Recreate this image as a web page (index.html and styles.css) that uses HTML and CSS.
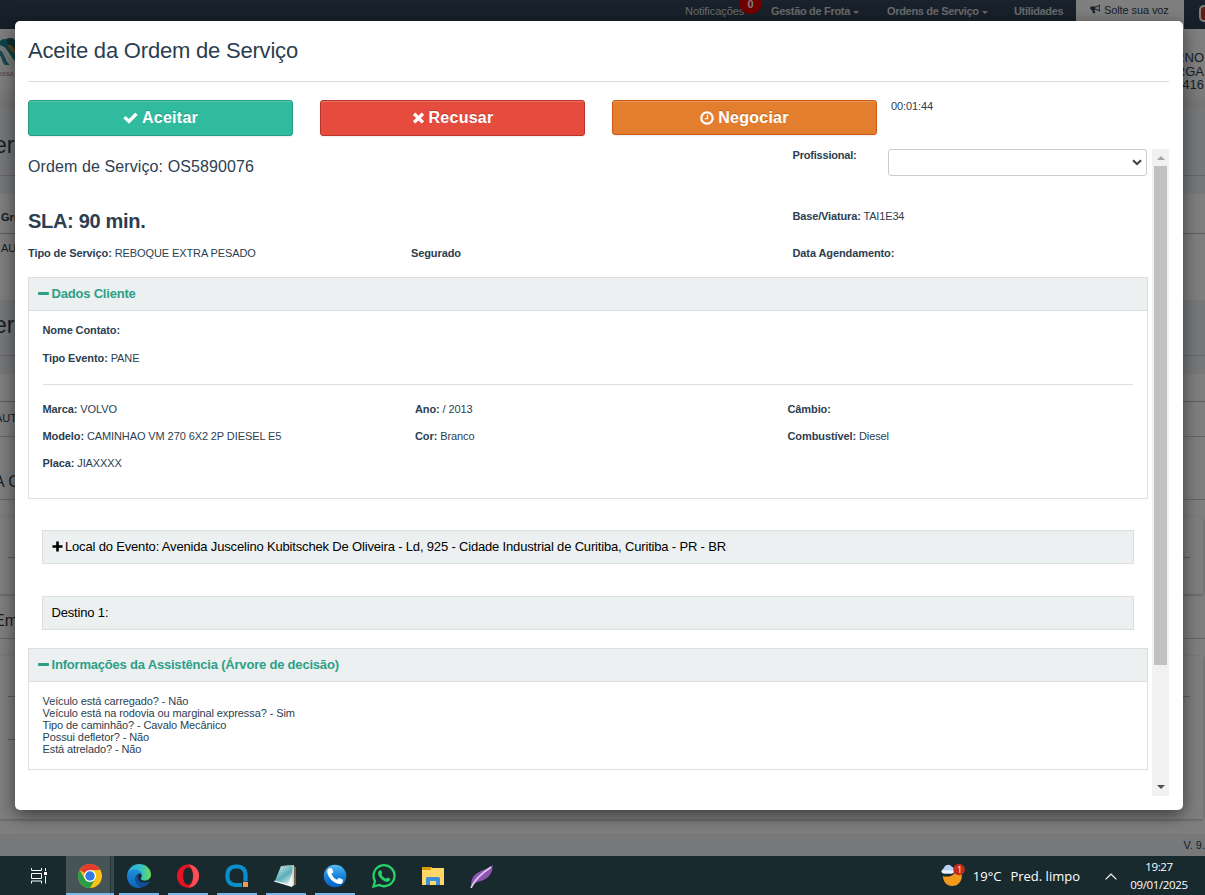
FILE: index.html
```html
<!DOCTYPE html>
<html lang="pt-BR">
<head>
  <meta charset="UTF-8" />
  <meta name="viewport" content="width=device-width, initial-scale=1.0"/>
  <title>Aceite da Ordem de Serviço</title>
  <link rel="stylesheet" href="styles.css">
</head>
<body>

  <!-- Page behind the modal -->
  <div class="page">
    <nav class="navbar">
      <span class="nav-item nav-notif">Notificações<b class="badge">0</b></span>
      <span class="nav-item nav-frota">Gestão de Frota <i class="caret"></i></span>
      <span class="nav-item nav-ordens">Ordens de Serviço <i class="caret"></i></span>
      <span class="nav-item nav-util">Utilidades</span>
      <span class="nav-voice">
        <svg width="11" height="10" viewBox="0 0 11 10"><path d="M9.8.3v7.6C8.2 6.500 6.400 5.800 4.500 5.800c-.2 1 .2 1.700.9 2.500-.3 1-1.700 1.300-2.500.7C2.300 7.800 2.100 6.900 2.300 5.800H1.200C.6 5.800.3 5.500.3 5V3.400c0-.5.3-.8.9-.8h3C6.200 2.600 8.200 1.800 9.800.3z" fill="#2c3e50"/><path d="M5.200 3.500C6.600 3.400 7.800 2.900 8.900 2.100v4C7.800 5.400 6.600 4.900 5.200 4.800z" fill="#fff"/></svg>
        Solte sua voz
      </span>
      <span class="nav-exit"></span>
    </nav>
    <header class="brand">
      <div class="logo">
        <svg width="15" height="32" viewBox="0 0 15 32"><path d="M0 5C4 1 8 2 15 14v11C9 19 5 8 0 10z" fill="#1b8a92"/><path d="M6 3c4-2 9-1 9 2v10C11 13 8 8 6 3z" fill="#185d69"/><path d="M8 9c4-1 7 3 7 8-3 0-6-4-7-8z" fill="#c98b2d"/><path d="M0 14c5 3 5 11 10 15H5C2 27 2 21 0 20z" fill="#2a929a"/><path d="M0 9c5 2 7 10 13 18v2C6 24 4 15 0 13z" fill="#e4efef"/></svg>
        <span>OSSA</span>
      </div>
      <div class="company">TERNO<br>CARGA<br>0416</div>
    </header>
    <div class="band band-title">er</div>
    <div class="band band-gap"></div>
    <div class="table">
      <div class="th">Gru</div>
      <div class="td">AU</div>
    </div>
    <div class="band band-title second">er</div>
    <div class="band band-gap"></div>
    <div class="table short">
      <div class="th"></div>
      <div class="td">AUT</div>
    </div>
    <div class="section-title">A C</div>
    <div class="card"></div>
    <div class="section-title last">Em</div>
    <div class="card tall"></div>
    <footer class="version">V. 9.</footer>
  </div>
  <div class="backdrop"></div>

  <div class="modal">
    <h1>Aceite da Ordem de Serviço</h1>

    <div class="actions">
      <button class="btn btn-accept">
        <svg width="15" height="12" viewBox="0 0 15 12"><path d="M.3 6.200 2.600 3.900 6 7.100 12.300.6 14.700 3 6 11.800z" fill="#fff"/></svg>
        Aceitar
      </button>
      <button class="btn btn-refuse">
        <svg width="13" height="12" viewBox="0 0 13 12"><path d="M3.200.6 6.500 3.800 9.800.6 12.100 2.900 8.900 6.100 12.100 9.300 9.800 11.600 6.500 8.400 3.200 11.600.9 9.300 4.100 6.100.9 2.900z" fill="#fff"/></svg>
        Recusar
      </button>
      <button class="btn btn-negotiate">
        <svg width="14" height="14" viewBox="0 0 14 14"><circle cx="7" cy="7" r="5.700" fill="none" stroke="#fff" stroke-width="2.200"/><path d="M7.500 3.800v3.800H4.800" fill="none" stroke="#fff" stroke-width="1.300"/></svg>
        Negociar
      </button>
      <span class="timer">00:01:44</span>
    </div>

    <div class="scroller">
      <div class="content">
        <div class="row row-order">
          <h2>Ordem de Serviço: OS5890076</h2>
          <div class="professional">
            <label for="professional">Profissional:</label>
            <div class="select-box">
              <select id="professional"><option></option></select>
              <svg width="10" height="7" viewBox="0 0 10 7"><path d="M1 1.200 5 5 9 1.200" fill="none" stroke="#444" stroke-width="2.100"/></svg>
            </div>
          </div>
        </div>
        <div class="row row-sla">
          <h3>SLA: 90 min.</h3>
          <p><b>Base/Viatura:</b> TAI1E34</p>
        </div>
        <div class="row row-service">
          <p><b>Tipo de Serviço:</b> REBOQUE EXTRA PESADO</p>
          <p><b>Segurado</b></p>
          <p><b>Data Agendamento:</b></p>
        </div>

        <section class="panel panel-client">
          <h4><i class="minus"></i>Dados Cliente</h4>
          <div class="panel-body">
            <p class="contact"><b>Nome Contato:</b></p>
            <p><b>Tipo Evento:</b> PANE</p>
            <hr>
            <div class="vehicle">
              <p><b>Marca:</b> VOLVO</p>
              <p><b>Ano:</b> / 2013</p>
              <p><b>Câmbio:</b></p>
              <p><b>Modelo:</b> CAMINHAO VM 270 6X2 2P DIESEL E5</p>
              <p><b>Cor:</b> Branco</p>
              <p><b>Combustível:</b> Diesel</p>
              <p><b>Placa:</b> JIAXXXX</p>
            </div>
          </div>
        </section>

        <div class="place place-event">
          <svg width="11" height="11" viewBox="0 0 11 11"><path d="M4.200.5h2.600v3.700h3.700v2.600H6.800v3.700H4.200V6.800H.5V4.200h3.700z"/></svg>
          <span>Local do Evento: Avenida Juscelino Kubitschek De Oliveira - Ld, 925 - Cidade Industrial de Curitiba, Curitiba - PR - BR</span>
        </div>
        <div class="place place-target"><span>Destino 1:</span></div>

        <section class="panel panel-info">
          <h4><i class="minus"></i>Informações da Assistência (Árvore de decisão)</h4>
          <div class="panel-body">
            Veículo está carregado? - Não<br>
            Veículo está na rodovia ou marginal expressa? - Sim<br>
            Tipo de caminhão? - Cavalo Mecânico<br>
            Possui defletor? - Não<br>
            Está atrelado? - Não
          </div>
        </section>
      </div>

      <div class="scrollbar">
        <i class="arrow-up"></i>
        <div class="thumb"></div>
        <i class="arrow-down"></i>
      </div>
    </div>
  </div>

  <div class="taskbar">
    <div class="task task-view">
      <svg width="18" height="18" viewBox="0 0 18 18" fill="none" stroke="#fff" stroke-width="1"><path d="M1.500 1v2.500h10V1M1.500 16.500V14h10v2.500M1.500 6.500h10v5h-10zM15.500 1v3M15.500 9v7.500"/><path d="M14 5h3v3h-3z" fill="#fff" stroke="none"/></svg>
    </div>
    <div class="task active">
      <svg width="24" height="24" viewBox="0 0 24 24"><circle cx="12" cy="12" r="12" fill="#fbc116"/><path d="M12 12 1.600 6A12 12 0 0 1 22.400 6H12z" fill="#e33b2e"/><path d="M1.600 6A12 12 0 0 0 12 24L17.200 15 12 12 6.800 15z" fill="#2a9e47"/><circle cx="12" cy="12" r="6" fill="#fff"/><circle cx="12" cy="12" r="4.700" fill="#3478e8"/></svg>
    </div>
    <div class="task open">
      <svg width="24" height="24" viewBox="0 0 24 24">
        <defs>
          <linearGradient id="edgeTop" x1="0" x2="1"><stop offset="0" stop-color="#2aa5e0"/><stop offset=".6" stop-color="#35c1c6"/><stop offset="1" stop-color="#6bdc4c"/></linearGradient>
          <linearGradient id="edgeLow" x1="0" y1="0" x2="0" y2="1"><stop offset="0" stop-color="#1c90dc"/><stop offset="1" stop-color="#0c62b8"/></linearGradient>
        </defs>
        <path d="M.3 10C1.500 4 6.500 0 12 0c7 0 12 5 12 10.500 0 4-3 6-6.500 6-2.700 0-4.300-1-3.300-2.500C16 11 14 7.500 9 7.500 4.500 7.500 1 9 .3 10z" fill="url(#edgeTop)"/>
        <path d="M0 12c0-4 4-6.500 8-6.500 3.500 0 6.300 2 6.700 4.500C12 8.800 8.500 10.500 8.500 15c0 4 3 7.500 7 8.300C7 26 0 20 0 12z" fill="url(#edgeLow)"/>
        <path d="M8.500 14c-.3 5 3.500 9.500 8 9 3-1 5-3 6-5 .2-.6-.2-.8-.7-.5-3.500 2-10 1.500-10.800-3.500-.2-1.300.2-2.300 1-3-2 0-3.300 1-3.500 3z" fill="#124e9a"/>
      </svg>
    </div>
    <div class="task open">
      <svg width="24" height="24" viewBox="0 0 24 24"><ellipse cx="12" cy="12" rx="11" ry="11.500" fill="#e81224"/><path d="M12 .5a11 11.500 0 0 1 0 23C19 20 19 4 12 .5z" fill="#f6505a"/><ellipse cx="12" cy="12" rx="5" ry="8.700" fill="#192a2d"/></svg>
    </div>
    <div class="task open">
      <svg width="24" height="24" viewBox="0 0 24 24"><path d="M17.500 21H10a7.500 7.500 0 0 1-7.500-7.500V10A7.500 7.500 0 0 1 10 2.500h3A7.500 7.500 0 0 1 20.500 10v8" fill="none" stroke="#098fca" stroke-width="4.200"/><path d="M17 17.500h6v6h-6z" fill="#192a2d"/><path d="M18 18h5v5h-5z" fill="#f7984b"/></svg>
    </div>
    <div class="task open">
      <svg width="24" height="24" viewBox="0 0 24 24"><defs><linearGradient id="note" x1="0" y1="0" x2=".6" y2="1"><stop offset="0" stop-color="#d5eef0"/><stop offset=".6" stop-color="#5badb8"/><stop offset="1" stop-color="#d8e9ed"/></linearGradient></defs><path d="M19 2l3 1v18l-4 1z" fill="#796246"/><path d="M8 2 20 1v20l-3 2z" fill="#c9d8dc"/><path d="M7 2 19 1.500 16 22 1 17z" fill="url(#note)"/><path d="M.5 16.500 14 20l4-10 1 11-1 2L0 17.500z" fill="#edf5f6"/><path d="M8 2.500 19 1.500" stroke="#8a9ea0" stroke-dasharray="1 1"/></svg>
    </div>
    <div class="task open">
      <svg width="24" height="24" viewBox="0 0 24 24"><defs><linearGradient id="call" x1="0" y1="0" x2="0" y2="1"><stop offset="0" stop-color="#54bdf3"/><stop offset=".5" stop-color="#1785dc"/><stop offset="1" stop-color="#0862c4"/></linearGradient></defs><circle cx="12" cy="12" r="11.300" fill="url(#call)"/><path d="M5.500 4.500 8.500 4l2 4-2 2c1 2.700 3 4.600 5.500 5.700l2-2 4 2-.5 3c-1 1.700-4 1.500-6.500.3C9 17.300 6 14 4.500 9.500 4 7.500 4.300 5.500 5.500 4.500z" fill="#fff"/></svg>
    </div>
    <div class="task">
      <svg width="24" height="24" viewBox="0 0 24 24"><path d="M1.500 22.500 3 17A10.500 10.500 0 1 1 7.200 21z" fill="none" stroke="#25d366" stroke-width="2.300"/><path d="M8 6.300c.7-.2 1.200 0 1.400.6l.8 2c.1.500-.8 1.400-.8 1.700 1 2 2.500 3.400 4.600 4.200.5 0 1.200-1.500 1.700-1.400l2.200 1.100c.5.300.3 1.800-.5 2.500-1.300 1-3 1-5.300-.1-3-1.400-5.600-4.400-6-6.900-.2-1.700.8-3.400 1.900-3.700z" fill="#25d366"/></svg>
    </div>
    <div class="task">
      <svg width="24" height="24" viewBox="0 0 24 24"><path d="M1 3h9l1.500 1H23v17H1z" fill="#ffd766"/><path d="M1 3h9v3H1z" fill="#dc9c09"/><path d="M5 21v-6.500a1.500 1.500 0 0 1 1.500-1.500h11a1.500 1.500 0 0 1 1.500 1.500V21h-4v-4H9v4z" fill="#3c8fdc"/></svg>
    </div>
    <div class="task">
      <svg width="24" height="24" viewBox="0 0 24 24"><path d="M1 24c0-9 2-13 8-16C14 5 20 5 22.500.5c.5 7-2.500 12-8 15C10 18 4.500 17 1 24z" fill="#8e55b5"/><path d="M1 24C4 17 9 11 21 3" stroke="#e2c8ee" stroke-width="1.700" fill="none"/></svg>
    </div>

    <div class="weather">
      <svg width="25" height="24" viewBox="0 0 25 24"><path d="M3 13c7 2 13-1 14-9 8 5 6 19-5 19-5 0-9-4-9-10z" fill="#f39a1c"/><path d="M0 0h19c0 9-8 14-16 13H0z" fill="#192a2e"/><path d="M4 10.500a3 3 0 0 1 0-5.500C5 1.500 10 .5 12 4c3 0 4 5.500 0 6.500z" fill="#b7d2f8"/><path d="M4 10.500c-2 0-3-1.500-2.500-3 4-1 8 1 13-.5 0 2-1 3.500-3 3.500z" fill="#e8f1fd"/><circle cx="19" cy="6.500" r="5.800" fill="#c42b1c"/><text x="17" y="10" fill="#fff" class="weather-count">1</text></svg>
      <span class="temp">19°C</span>
      <span>Pred. limpo</span>
    </div>
    <svg class="tray" width="12" height="7" viewBox="0 0 12 7"><path d="M.6 6.400 6 1l5.400 5.400" fill="none" stroke="#fff" stroke-width="1.200"/></svg>
    <div class="clock">19:27<br>09/01/2025</div>
  </div>

</body>
</html>
```
FILE: styles.css
```css
* {
  box-sizing: border-box;
}

body {
  margin: 0;
  height: 895px;
  position: relative;
  overflow: hidden;
  font-family: "Liberation Sans", Arial, sans-serif;
  font-size: 11px;
  line-height: 13px;
  color: #2c3e50;
}

h1, h2, h3, h4, p {
  margin: 0;
}

/* page behind */
.page {
  height: 856px;
  display: flex;
  flex-direction: column;
  overflow: hidden;
  background: #fff;
}

.navbar {
  display: flex;
  flex: none;
  height: 29px;
  padding-left: 685px;
  background: linear-gradient(#34455a, #2c3e50);
  white-space: nowrap;
}

.nav-item {
  flex: none;
  padding-top: 5px;
  color: #d0d4d6;
  font-weight: bold;
  letter-spacing: -0.32px;
}

.nav-notif {
  position: relative;
  width: 86px;
  font-weight: normal;
  letter-spacing: -0.05px;
}

.badge {
  position: absolute;
  left: 54px;
  top: -9px;
  width: 23px;
  height: 23px;
  padding-top: 7px;
  border-radius: 12px;
  background: #e00000;
  color: #fff;
  text-align: center;
}

.nav-frota {
  width: 116px;
}

.nav-ordens {
  width: 127px;
}

.nav-util {
  width: 62px;
}

.caret {
  display: inline-block;
  border: 3px solid transparent;
  border-top-color: #d0d4d6;
  border-bottom: 0;
  vertical-align: 1px;
}

.nav-voice {
  flex: none;
  width: 108px;
  padding: 4px 0 0 14px;
  background: #fff;
  letter-spacing: -0.1px;
}

.nav-exit {
  flex: none;
  width: 22px;
  height: 17px;
  margin: 5px 0 0 15px;
  border: 2px solid #fff;
  border-radius: 5px;
  background: #c0392b;
}

.brand {
  display: flex;
  flex: none;
  justify-content: space-between;
  height: 78px;
  background: linear-gradient(#fff 70%, #eaeaea);
}

.logo {
  display: flex;
  flex-direction: column;
  padding-top: 7px;
  font-size: 6px;
  color: #777;
}

.logo span {
  margin-left: -3px;
}

.company {
  padding: 22px 1px 0 0;
  font-size: 13px;
  line-height: 13.500px;
  text-align: right;
}

.band {
  flex: none;
  background: #eef1f5;
}

.band-title {
  height: 69px;
  padding-top: 32px;
  border-bottom: 1px solid #ccc;
  font-size: 23px;
  text-indent: -6px;
}

.band-title.second {
  height: 56px;
  padding-top: 19px;
}

.band-gap {
  height: 18px;
}

.table {
  flex: none;
  height: 106px;
}

.th {
  height: 40px;
  padding: 17px 0 0 1px;
  border-bottom: 1px solid #bbb;
  font-weight: bold;
}

.td {
  padding: 8px 0 0 1px;
}

.table.short {
  height: 63px;
  border-bottom: 1px solid #ccc;
}

.short .th {
  height: 28px;
}

.short .td {
  padding: 10px 0 0;
  text-indent: -5px;
}

.section-title {
  flex: none;
  height: 63px;
  padding-top: 38px;
  border-bottom: 1px solid #ccc;
  font-size: 16px;
  text-indent: -6px;
}

.section-title.last {
  height: 45px;
  padding-top: 20px;
}

.card {
  flex: none;
  height: 77px;
  margin: 17px 2px 0 0;
  padding: 40px 13px 0 8px;
  box-shadow: 0 1px 3px #bbb;
}

.card::before {
  content: "";
  display: block;
  border-top: 1px solid #bbb;
}

.card.tall {
  height: 163px;
}

.card.tall::after {
  content: "";
  display: block;
  width: 50%;
  margin-top: 42px;
  border-top: 1px solid #bbb;
}

.version {
  flex: none;
  height: 22px;
  margin-top: 15px;
  padding: 5px 0 0;
  background: #eef1f5;
  text-align: right;
}

.backdrop {
  position: absolute;
  left: 0;
  right: 0;
  top: 0;
  height: 856px;
  background: rgba(0, 0, 0, 0.5);
}

/* modal */
.modal {
  position: absolute;
  left: 15px;
  top: 21px;
  width: 1168px;
  height: 789px;
  padding: 0 14px 0 13px;
  border-radius: 5px;
  background: #fff;
  box-shadow: 0 5px 18px rgba(0, 0, 0, 0.55);
  letter-spacing: -0.1px;
}

h1 {
  height: 61px;
  padding-top: 17px;
  border-bottom: 1px solid #dcdcdc;
  font-size: 22px;
  line-height: 25px;
  font-weight: normal;
  letter-spacing: -0.2px;
}

.actions {
  display: flex;
  align-items: flex-start;
  gap: 27px;
  padding-top: 18px;
  height: 67px;
}

.btn {
  display: flex;
  align-items: center;
  justify-content: center;
  gap: 4px;
  width: 265px;
  height: 36px;
  padding: 0 0 1px;
  border: 1px solid;
  border-radius: 3px;
  color: #fff;
  font: bold 16px "Liberation Sans", Arial, sans-serif;
  letter-spacing: 0.25px;
  text-shadow: 0 -1px 0 rgba(0, 0, 0, 0.2);
  box-shadow: inset 0 1px 0 rgba(255, 255, 255, 0.2), 0 1px 2px rgba(0, 0, 0, 0.08);
}

.btn-accept {
  background: #30bb9f;
  border-color: #279c80;
}

.btn-refuse {
  background: #e54c3e;
  border-color: #b8352b;
}

.btn-negotiate {
  height: 35px;
  padding: 1px 0 0;
  background: #e37e2e;
  border-color: #d0570f;
}

.timer {
  margin-left: -13px;
}

.scroller {
  display: flex;
  justify-content: space-between;
  height: 647px;
}

.content {
  width: 1120px;
}

.row {
  display: flex;
}

.row-order {
  justify-content: space-between;
  height: 60px;
}

h2 {
  padding-top: 8px;
  font-size: 16px;
  line-height: 20px;
  font-weight: normal;
  letter-spacing: 0.1px;
}

.professional {
  display: flex;
  width: 355.500px;
}

.professional label {
  width: 95.500px;
  font-weight: bold;
  letter-spacing: -0.2px;
}

.select-box {
  position: relative;
}

.select-box select {
  display: block;
  width: 259px;
  height: 27px;
  border: 1px solid #ccc;
  border-radius: 3px;
  background: #fff;
  appearance: none;
}

.select-box svg {
  position: absolute;
  right: 5px;
  top: 10px;
}

.row-sla {
  height: 37px;
}

h3 {
  width: 764.500px;
  font-size: 20px;
  line-height: 24px;
  letter-spacing: -0.3px;
}

.row-sla p {
  padding-top: 1px;
  letter-spacing: -0.15px;
}

.row-service {
  height: 31px;
}

.row-service p {
  padding-top: 1px;
}

.row-service p:nth-child(1) {
  width: 383px;
}

.row-service p:nth-child(2) {
  width: 381.500px;
}

.panel {
  border: 1px solid #dcdedf;
}

.panel h4 {
  display: flex;
  align-items: center;
  gap: 3px;
  height: 33px;
  padding: 0 0 2px 9px;
  border-bottom: 1px solid #dcdedf;
  background: #ecf0f1;
  color: #2c9f88;
  font-size: 13px;
  letter-spacing: -0.2px;
}

.minus {
  width: 10.500px;
  height: 3px;
  border-radius: 1px;
  background: #2c9f88;
}

.panel-body {
  padding: 13px 14px 0 13.500px;
}

.panel-client {
  height: 222px;
}

.contact {
  margin-bottom: 15px;
}

hr {
  margin: 19px 0 18px;
  border: 0;
  border-top: 1px solid #dcdedf;
}

.vehicle {
  display: grid;
  grid-template-columns: 372.500px 372.500px 1fr;
  row-gap: 14px;
}

.place {
  display: flex;
  align-items: center;
  gap: 2.500px;
  height: 34px;
  margin: 0 14px;
  padding: 0 0 1px 8.500px;
  border: 1px solid #dcdedf;
  background: #ecf0f1;
  color: #000;
  font-size: 13px;
  letter-spacing: -0.17px;
}

.place-event {
  margin-top: 31px;
}

.place-target {
  margin-top: 32px;
}

.panel-info {
  height: 122px;
  margin-top: 18px;
}

.panel-info .panel-body {
  line-height: 12px;
}

.scrollbar {
  display: flex;
  flex-direction: column;
  align-items: center;
  width: 17px;
  background: #f1f1f1;
}

.arrow-up {
  margin: 7px 0 6px;
  border: 4px solid transparent;
  border-top: 0;
  border-bottom-color: #a3a3a3;
}

.thumb {
  width: 13px;
  height: 499px;
  background: #c1c1c1;
}

.arrow-down {
  margin: auto 0 7px;
  border: 4px solid transparent;
  border-bottom: 0;
  border-top-color: #505050;
}

/* taskbar */
.taskbar {
  position: relative;
  display: flex;
  height: 39px;
  padding-left: 19px;
  background: #192a2e;
  color: #fff;
  font-family: "Open Sans", "Noto Sans", sans-serif;
}

.task {
  display: flex;
  justify-content: center;
  width: 40px;
  margin-right: 9px;
  padding-top: 8px;
  border-bottom: 2px solid transparent;
}

.task svg {
  flex: none;
}

.task-view {
  margin-right: 7px;
  padding-top: 11px;
}

.open {
  border-color: #76b9ed;
}

.active {
  width: 48px;
  margin-right: 5px;
  background: linear-gradient(90deg, #475456 44px, #263538 44px, #263538 45px, #3b484b 45px);
  border-color: #76b9ed;
}

.weather {
  display: flex;
  margin-left: auto;
  padding-top: 8px;
  font-size: 13px;
  line-height: 24px;
}

.weather svg {
  margin: -1px 8px 0 0;
}

.weather-count {
  font-size: 9px;
}

.temp {
  margin-right: 9px;
}

.tray {
  margin: 17px 12px 0 25px;
}

.clock {
  width: 60px;
  margin-right: 16px;
  padding-top: 2px;
  font-size: 11.500px;
  line-height: 18px;
  text-align: center;
  letter-spacing: -0.35px;
}
```
